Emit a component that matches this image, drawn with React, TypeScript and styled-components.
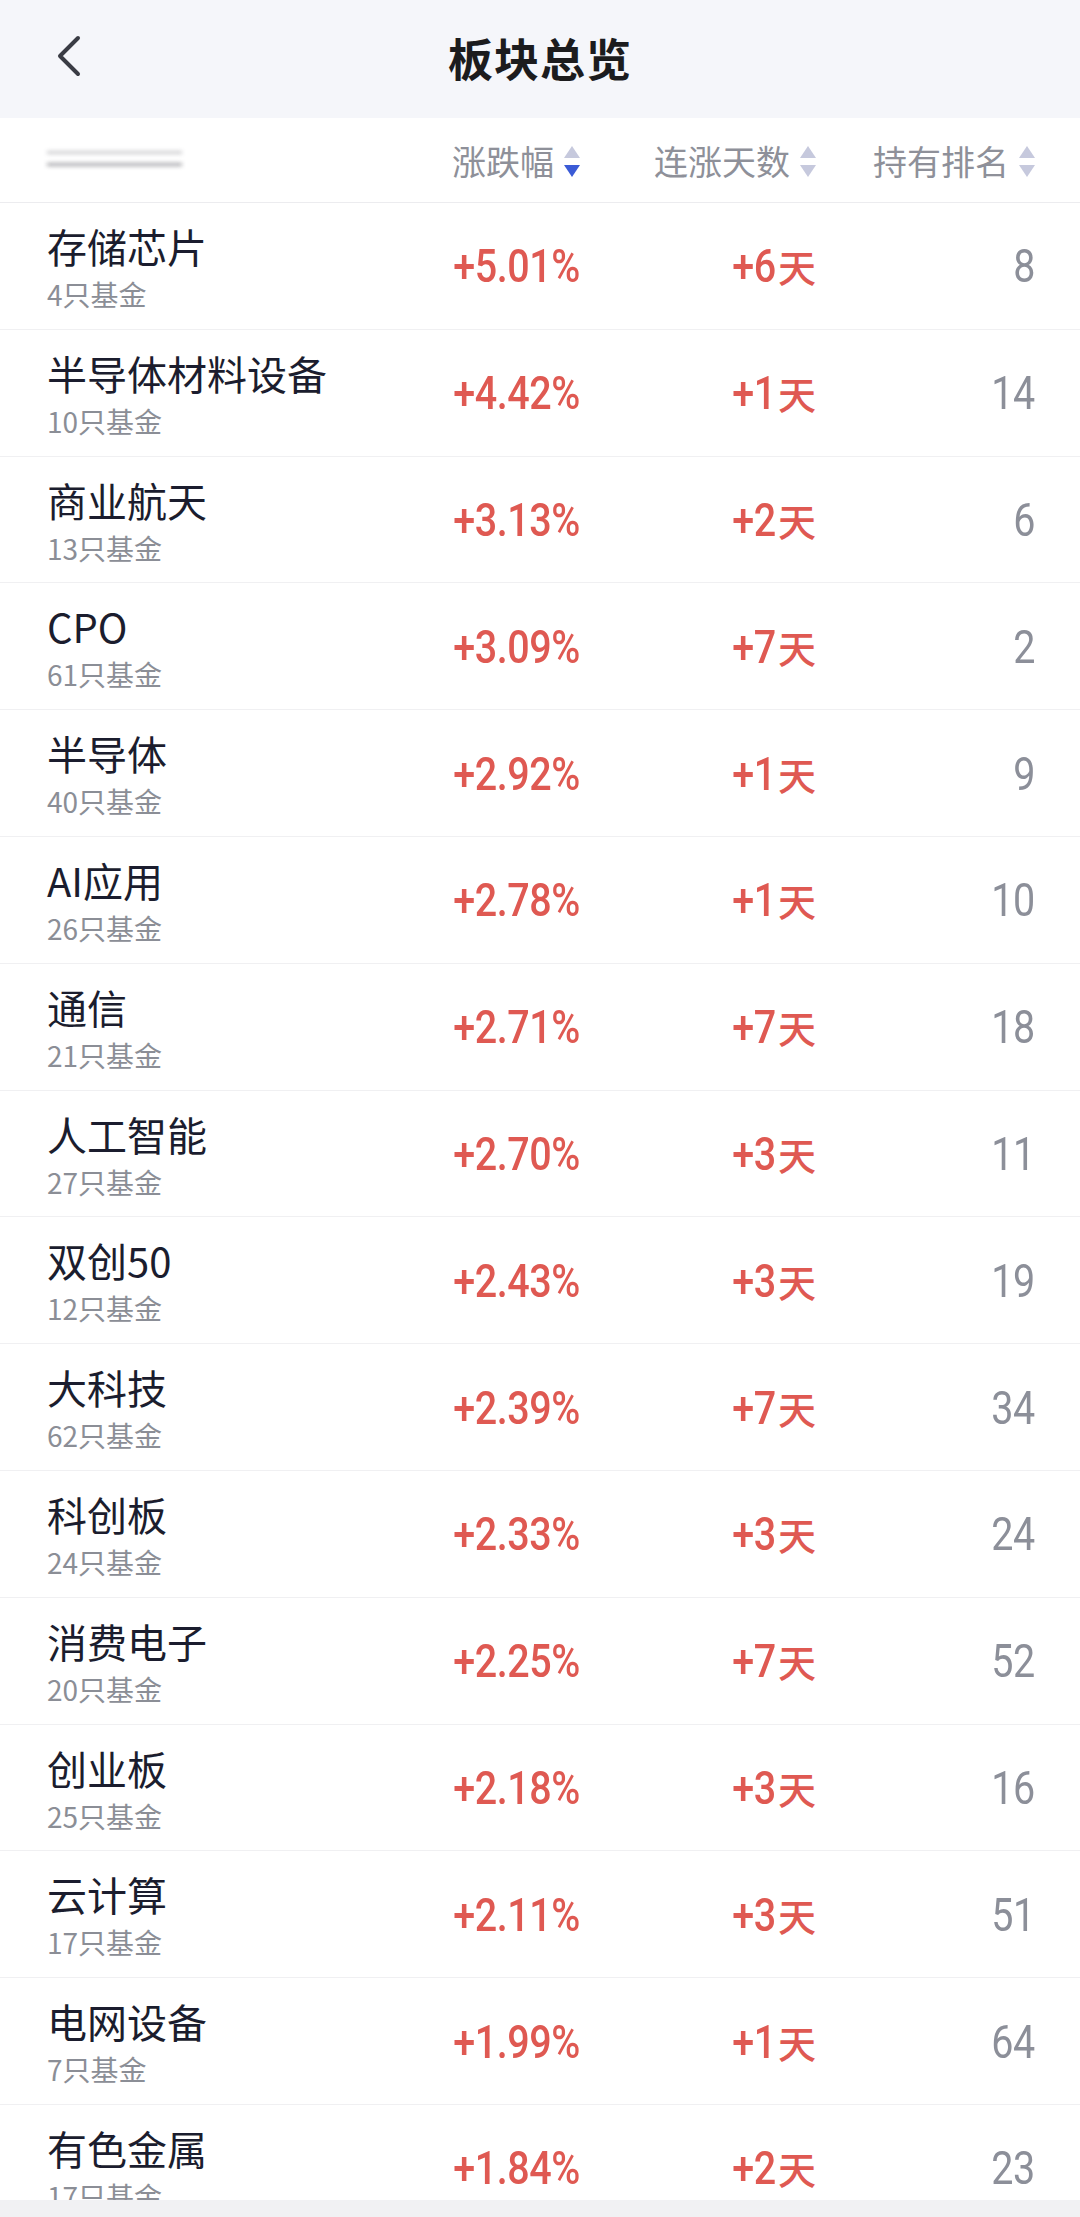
import React from 'react';
import styled, {createGlobalStyle} from 'styled-components';

const GlobalStyle = createGlobalStyle`
  html, body {
    margin: 0;
    padding: 0;
    background: #ffffff;
  }
  body {
    font-family: "Noto Sans CJK SC", "Noto Sans", sans-serif;
  }
`

type Sector = {
    name: string
    funds: number
    change: string
    days: number
    rank: number
}

const sectors: Sector[] = [
    {name: '存储芯片', funds: 4, change: '+5.01%', days: 6, rank: 8},
    {name: '半导体材料设备', funds: 10, change: '+4.42%', days: 1, rank: 14},
    {name: '商业航天', funds: 13, change: '+3.13%', days: 2, rank: 6},
    {name: 'CPO', funds: 61, change: '+3.09%', days: 7, rank: 2},
    {name: '半导体', funds: 40, change: '+2.92%', days: 1, rank: 9},
    {name: 'AI应用', funds: 26, change: '+2.78%', days: 1, rank: 10},
    {name: '通信', funds: 21, change: '+2.71%', days: 7, rank: 18},
    {name: '人工智能', funds: 27, change: '+2.70%', days: 3, rank: 11},
    {name: '双创50', funds: 12, change: '+2.43%', days: 3, rank: 19},
    {name: '大科技', funds: 62, change: '+2.39%', days: 7, rank: 34},
    {name: '科创板', funds: 24, change: '+2.33%', days: 3, rank: 24},
    {name: '消费电子', funds: 20, change: '+2.25%', days: 7, rank: 52},
    {name: '创业板', funds: 25, change: '+2.18%', days: 3, rank: 16},
    {name: '云计算', funds: 17, change: '+2.11%', days: 3, rank: 51},
    {name: '电网设备', funds: 7, change: '+1.99%', days: 1, rank: 64},
    {name: '有色金属', funds: 17, change: '+1.84%', days: 2, rank: 23},
]

const SortArrows = ({active}: { active?: 'up' | 'down' }) => (
    <ArrowBox>
        <svg width="16" height="32" viewBox="0 0 16 32">
            <path d="M8 1 L16 13 L0 13 Z" fill={active === 'up' ? '#3b5bd6' : '#c6c9dd'}/>
            <path d="M0 20 L16 20 L8 32 Z" fill={active === 'down' ? '#3b5bd6' : '#c6c9dd'}/>
        </svg>
    </ArrowBox>
)

export default function App() {
    return (
        <Page>
            <GlobalStyle/>
            <TopBar>
                <BackButton>
                    <svg width="26" height="42" viewBox="0 0 26 42">
                        <path d="M22 3 L4 21 L22 39" fill="none" stroke="#3a3c44" strokeWidth="4"
                              strokeLinecap="round" strokeLinejoin="round"/>
                    </svg>
                </BackButton>
                <Title>板块总览</Title>
            </TopBar>

            <HeadRow>
                <Blurred>
                    <BlurLine $light/>
                    <BlurLine/>
                </Blurred>
                <HeadCell>涨跌幅<SortArrows active="down"/></HeadCell>
                <HeadCell>连涨天数<SortArrows/></HeadCell>
                <HeadCell>持有排名<SortArrows/></HeadCell>
            </HeadRow>

            <List>
                {sectors.map(s => (
                    <Row key={s.name}>
                        <NameCell>
                            <Name>{s.name}</Name>
                            <Sub>{s.funds}只基金</Sub>
                        </NameCell>
                        <Change><Narrow>{s.change}</Narrow></Change>
                        <Days><Narrow>+{s.days}</Narrow><DayUnit>天</DayUnit></Days>
                        <Rank><Narrow>{s.rank}</Narrow></Rank>
                    </Row>
                ))}
            </List>

            <BottomBar/>
        </Page>
    );
}

const Page = styled.div`
  width: 1080px;
  height: 2217px;
  display: flex;
  flex-direction: column;
  overflow: hidden;
  background: #ffffff;
`

const TopBar = styled.div`
  flex: 0 0 118px;
  position: relative;
  display: flex;
  align-items: center;
  justify-content: center;
  background: #f5f6fa;
`

const BackButton = styled.div`
  position: absolute;
  left: 56px;
  top: 35px;
  width: 26px;
  height: 42px;
  display: flex;
`

const Title = styled.div`
  font-size: 45px;
  font-weight: 700;
  color: #1c1c1e;
  letter-spacing: 1px;
  margin-top: -3px;
`

const columns = `1fr 180px 236px 219px`

const HeadRow = styled.div`
  flex: 0 0 85px;
  box-sizing: border-box;
  display: grid;
  grid-template-columns: ${columns};
  align-items: center;
  padding: 0 45px 0 47px;
  border-bottom: 1.5px solid #ececef;
`

const Blurred = styled.div`
  display: flex;
  flex-direction: column;
  gap: 9px;
  width: 135px;
  margin-top: -3px;
`

const BlurLine = styled.div<{ $light?: boolean }>`
  height: 3px;
  width: 100%;
  background: #8b8b90;
  filter: blur(2px);
  opacity: ${p => p.$light ? 0.45 : 0.8};
`

const HeadCell = styled.div`
  display: flex;
  justify-content: flex-end;
  align-items: center;
  font-size: 34px;
  color: #8e9099;
  gap: 10px;
`

const ArrowBox = styled.span`
  display: flex;
  width: 16px;
  height: 32px;
  margin-top: 2px;
`

const List = styled.div`
  flex: 1;
  overflow: hidden;
`

const Row = styled.div`
  height: 126.8px;
  box-sizing: border-box;
  display: grid;
  grid-template-columns: ${columns};
  align-items: center;
  padding: 0 45px 0 47px;
  border-bottom: 1.5px solid #f0f0f2;
`

const NameCell = styled.div`
  align-self: start;
  padding-top: 20px;
  display: flex;
  flex-direction: column;
`

const Name = styled.div`
  font-size: 40px;
  line-height: 46px;
  color: #1b1d2e;
  white-space: nowrap;
`

const Sub = styled.div`
  font-size: 28px;
  line-height: 50px;
  color: #8b8e96;
  white-space: nowrap;
`

const Num = styled.div`
  font-family: Roboto, "Noto Sans CJK SC", sans-serif;
  font-size: 47px;
  text-align: right;
  white-space: nowrap;
`

const Narrow = styled.span`
  display: inline-block;
  transform: scaleX(0.84);
  transform-origin: right center;
  letter-spacing: -0.5px;
`

const Change = styled(Num)`
  color: #df5952;
  font-weight: 500;
`

const Days = styled(Num)`
  color: #df5952;
  font-weight: 500;
  display: flex;
  justify-content: flex-end;
  align-items: baseline;
`

const DayUnit = styled.span`
  font-family: "Noto Sans CJK SC", sans-serif;
  font-size: 38px;
  font-weight: 500;
  margin-left: 2px;
`

const Rank = styled(Num)`
  color: #8c8f99;
  font-weight: 400;
`

const BottomBar = styled.div`
  flex: 0 0 17px;
  background: #f1f1f3;
`
